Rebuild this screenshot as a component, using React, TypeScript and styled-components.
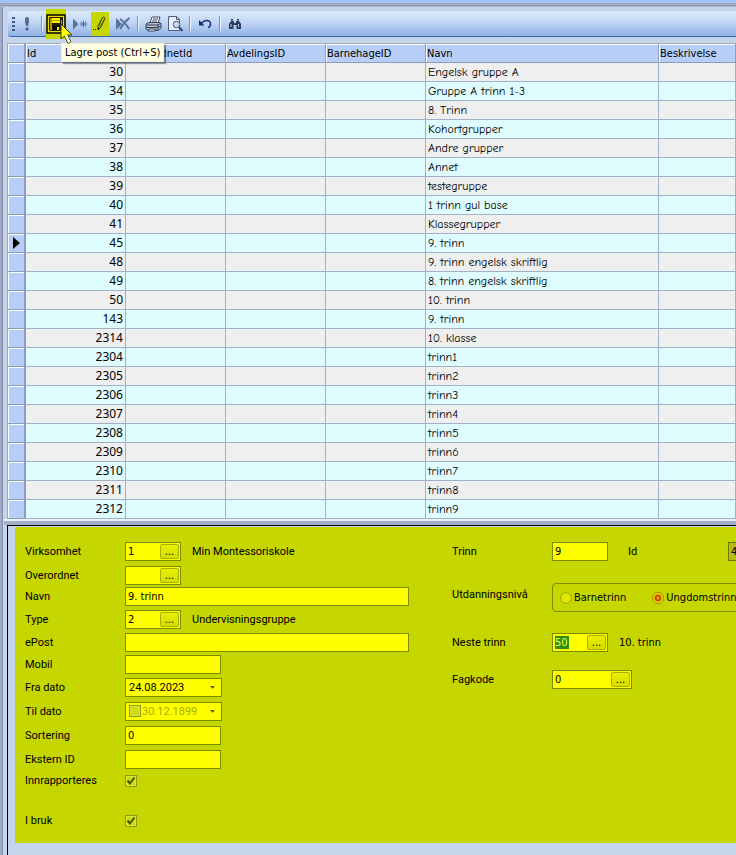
import React from "react";
import styled, { createGlobalStyle, css } from "styled-components";

const Global = createGlobalStyle`
  *, *::before, *::after { box-sizing: border-box; }
  html, body { margin: 0; padding: 0; background: #c4d5ea; overflow-x: hidden; }
  input, button, label { font: inherit; color: inherit; }
`;

const tahoma = `"DejaVu Sans Condensed", "Noto Sans", sans-serif`;
const sans = `Roboto, "Liberation Sans", Arial, sans-serif`;
const comic = `"Comic Sans MS", "Comic Neue", "Noto Sans", sans-serif`;

const Shell = styled.div`
  display: flex;
  flex-direction: column;
  min-height: 100vh;
  overflow: hidden;
  background: #c4d5ea;
  color: #000;
`;

const TitleStrip = styled.div`
  height: 7px;
  background: linear-gradient(#a2c3f8 0 3px, #9aa5bd 3px 4px, #a8b0c4 4px 5px, #8b95b2 5px 6px, #b3bccd 6px);
`;

const Frame = styled.div`
  flex: 1;
  display: flex;
  flex-direction: column;
  border-left: 1px solid #a3a9c8;
  box-shadow: inset 1px 0 #9ba3c4, inset 2px 0 #8790ad;
  padding: 4px 0 0 6px;
`;

const Toolbar = styled.div`
  position: relative;
  z-index: 2;
  display: flex;
  align-items: center;
  height: 26px;
  margin-left: 1px;
  padding-left: 4px;
  border-bottom: 1px solid #3b66ab;
  border-radius: 3px 0 0 3px;
  background: linear-gradient(#deebfc, #c0d6f5 45%, #91b2e6);
`;

const Grip = styled.div`
  width: 3px;
  height: 14px;
  margin-right: 1px;
  background: repeating-linear-gradient(#43597f 0 2px, transparent 2px 4px);
`;

const Separator = styled.div`
  width: 2px;
  height: 15px;
  margin: 0 3px;
  background: linear-gradient(90deg, #6f94ce 50%, #eef5ff 50%);
`;

const Spacer = styled.div`
  width: 3px;
`;

const ToolButton = styled.button<{ $marked?: "tall" | "short" }>`
  position: relative;
  display: flex;
  flex: none;
  align-items: center;
  justify-content: center;
  width: ${(p) => (p.$marked === "tall" ? 20 : p.$marked ? 18 : 22)}px;
  height: ${(p) => (p.$marked === "tall" ? 30 : 24)}px;
  padding: 0;
  border: 0;
  background: ${(p) => (p.$marked ? "#c6d600" : "transparent")};
  svg { display: block; flex: none; }
`;

const Tooltip = styled.span`
  position: absolute;
  top: 34px;
  left: 15px;
  height: 19px;
  padding: 0 3px;
  border: 1px solid #f3f3d8;
  background: #ffffe1;
  box-shadow: 2px 2px 1px rgba(60, 70, 90, 0.55);
  font: 11px/17px ${tahoma};
  white-space: nowrap;
`;

const Pointer = styled.svg`
  position: absolute;
  top: 14px;
  left: 14px;
  z-index: 1;
`;

const GridTable = styled.table`
  width: 100%;
  margin-top: 6px;
  border-collapse: separate;
  border-spacing: 0;
  table-layout: fixed;
  border-top: 1px solid #9caabf;
  border-left: 1px solid #9caabf;
`;

const HeadCell = styled.th`
  height: 19px;
  padding: 2px 1px 0;
  border-right: 1px solid #8d9dbb;
  border-bottom: 1px solid #8d9dbb;
  background: #b7cff8;
  box-shadow: inset 1px 1px #fff;
  font: 11px/16px ${tahoma};
  text-align: left;
  white-space: nowrap;
`;

const Row = styled.tr`
  background: #efefef;
  &:nth-child(even) { background: #dffdff; }
`;

const RowHandle = styled.th`
  height: 19px;
  padding: 0 0 0 5px;
  border-right: 2px solid #8d9dbb;
  border-bottom: 1px solid #8d9dbb;
  background: #b7cff8;
  box-shadow: inset 1px 1px #fff;
  svg { display: block; }
`;

const Cell = styled.td<{ $number?: boolean }>`
  height: 19px;
  padding: 0 2px;
  border-right: 1px solid #a0b1c8;
  border-bottom: 1px solid #a0b1c8;
  font: ${(p) => (p.$number ? `12px/18px "Noto Sans", sans-serif` : `12px/18px ${comic}`)};
  text-align: ${(p) => (p.$number ? "right" : "left")};
  white-space: nowrap;
  overflow: hidden;
`;

const Splitter = styled.div`
  height: 6px;
  margin-left: -3px;
  border-top: 2px solid #edf2fa;
  background: #a0b2cb;
`;

const DetailPane = styled.div`
  flex: 1;
  padding: 1px 0 12px 7px;
  border-top: 1px solid #000;
  border-left: 1px solid #000;
`;

const Form = styled.form`
  display: grid;
  grid-template-columns: 427px minmax(0, 1fr);
  padding: 15px 0 9px 10px;
  overflow: hidden;
  background: #c6d600;
  font: 11px/14px ${sans};
`;

const Column = styled.div`
  display: flex;
  flex-direction: column;
  min-width: 0;
`;

const FieldRow = styled.div<{ $gap?: number; $height?: number }>`
  display: flex;
  align-items: center;
  height: ${(p) => p.$height ?? 19}px;
  margin-bottom: ${(p) => p.$gap ?? 4}px;
  white-space: nowrap;
`;

const Label = styled.label`
  flex: none;
  width: 100px;
`;

const IdLabel = styled(Label)`
  margin-left: 20px;
`;

const GroupLabel = styled.span`
  flex: none;
  width: 100px;
  padding-bottom: 6px;
`;

const box = css`
  flex: none;
  height: 19px;
  border: 1px solid #7c8c00;
  background: #ff0;
`;

const TextBox = styled.input<{ $width: number; $readonly?: boolean }>`
  ${box}
  width: ${(p) => p.$width}px;
  padding: 0 2px;
  border-radius: 0;
  outline: 0;
  font: 11px/17px ${tahoma};
  ${(p) => p.$readonly && css`background: #b5bd0d; border-color: #6b7400;`}
`;

const LookupBox = styled.div<{ $width: number }>`
  ${box}
  display: flex;
  align-items: stretch;
  width: ${(p) => p.$width}px;
`;

const BareInput = styled.input<{ $marked?: boolean }>`
  flex: 1;
  min-width: 0;
  width: 0;
  padding: 0 2px;
  border: 0;
  outline: 0;
  background: ${(p) =>
    p.$marked
      ? "linear-gradient(#2e8f12, #2e8f12) 2px 2px / 14px 13px no-repeat"
      : "transparent"};
  color: ${(p) => (p.$marked ? "#e8ff50" : "#000")};
  font: 11px/17px ${tahoma};
`;

const MoreButton = styled.button`
  width: 19px;
  margin: 1px;
  padding: 0;
  border: 1px solid #a5b000;
  border-radius: 2px;
  background: linear-gradient(#e8ee00, #d5dd00);
  font: 11px/13px ${tahoma};
`;

const Info = styled.span`
  margin-left: 11px;
`;

const InfoPlain = styled(Info)`
  font: 11px/14px ${tahoma};
`;

const DateInput = styled(BareInput)`
  padding: 0 0 0 3px;
  font: 11px/17px ${sans};
  &:disabled { padding-left: 0; color: #a3ab00; }
`;

const DropButton = styled.button`
  width: 17px;
  padding: 0;
  border: 0;
  background: transparent;
  svg { display: block; margin: 0 auto; }
`;

const Check = styled.input`
  flex: none;
  appearance: none;
  width: 12px;
  height: 12px;
  margin: 0 1px 0 0;
  border: 1px solid #8c9a14;
  outline: 1px solid #dce53c;
  outline-offset: -2px;
  background: #d2dc14;
  &:checked {
    background: #d2dc14 url("data:image/svg+xml,%3Csvg xmlns='http://www.w3.org/2000/svg' viewBox='0 0 10 10'%3E%3Cpath d='M1.5 4.5 4 7.5 8.5 1.5' fill='none' stroke='%23435900' stroke-width='2'/%3E%3C/svg%3E") center / 10px 10px no-repeat;
  }
  &:disabled { margin: 2px 1px 0 3px; }
`;

const RadioGroup = styled.div`
  display: flex;
  flex: none;
  align-items: center;
  gap: 26px;
  width: 260px;
  height: 29px;
  padding-left: 7px;
  border: 1px solid #7c8c00;
  border-radius: 4px;
`;

const RadioLabel = styled.label`
  display: flex;
  align-items: center;
  gap: 2px;
  font: 11px/14px ${tahoma};
`;

const Radio = styled.input`
  appearance: none;
  width: 12px;
  height: 12px;
  margin: 0;
  border: 1px solid #a2a900;
  border-radius: 50%;
  background: radial-gradient(circle, #e2e800 40%, #cfd700);
  &:checked {
    border-color: #a98900;
    background: radial-gradient(circle, #f5a400 0 1px, #c84b00 2px 3px, #eee000 4px);
  }
`;

const icon = { width: 16, height: 16, viewBox: "0 0 16 16", "aria-hidden": true } as const;

const BangIcon = () => (
  <svg {...icon}>
    <path d="M6 2.500Q6 1 8 1t2 1.500V6L9 10H7L6 6z" fill="#596b8c" />
    <circle cx="8" cy="13" r="1.800" fill="#596b8c" />
  </svg>
);

const SaveIcon = () => (
  <svg width="20" height="20" viewBox="0 0 20 20" aria-hidden="true">
    <rect x="1" y="1" width="18" height="18" fill="#f4dc00" stroke="#000" strokeWidth="1.500" />
    <path d="M3 3h14v14H4l-1-1z" fill="#221f00" />
    <path d="M5 4h1v12H4V4zM15 6h1v10h-1z" fill="#a89b00" />
    <path d="M6 4h8v5H6z" fill="#ffed00" />
    <path d="M6 6.500h8" stroke="#b5a600" />
    <path d="M7 12h6v4H7z" fill="#000" />
    <path d="M11 13h2v3h-2z" fill="#ffef00" />
  </svg>
);

const NewIcon = () => (
  <svg {...icon}>
    <path d="M1 2.500 6.500 8 1 13.500z" fill="#59719f" />
    <path d="M11.500 4.500v7M8.500 6l6 4M14.500 6l-6 4M8 8h7" stroke="#59719f" />
  </svg>
);

const PencilIcon = () => (
  <svg {...icon}>
    <path d="M11 1 13 2 9 11 6 14V10z" fill="#d8e000" stroke="#344000" />
    <path d="M10 3 7 10M12 4 8 11" stroke="#344000" strokeWidth=".7" />
    <path d="M6 11v3l2-2zM1 13h1v1H1zM3 13h1v1H3z" fill="#182000" />
  </svg>
);

const CancelIcon = () => (
  <svg {...icon}>
    <path d="M1 2 7 8 1 14z" fill="#59719f" />
    <path d="M5 3Q10 6 14 13M14.500 2Q9 6 5 13" fill="none" stroke="#59719f" strokeWidth="2" />
  </svg>
);

const PrintIcon = () => (
  <svg width="17" height="16" viewBox="0 0 17 16" aria-hidden="true">
    <path d="M5 7 7 1h8l-2 6z" fill="#f8fbff" stroke="#3e4c63" />
    <path d="M8 3h5M7 5h5" stroke="#3e4c63" />
    <path d="M1 8 4 6.500h11l1 1V12l-3 2.500H3L1 13z" fill="#b4bfcf" stroke="#35425a" />
    <path d="M1 9h12l3-2M1 11.500h12l3-2M13 9v5" fill="none" stroke="#35425a" />
    <path d="M4 13h7l-1 2H3z" fill="#fff" stroke="#35425a" />
  </svg>
);

const PreviewIcon = () => (
  <svg width="17" height="16" viewBox="0 0 17 16" aria-hidden="true">
    <path d="M1.500.500h8l3 3v11h-11z" fill="#e5effd" stroke="#4c5d79" />
    <path d="M9.500.500v3h3" fill="none" stroke="#4c5d79" />
    <circle cx="9.500" cy="8.500" r="3.300" fill="#c4d6ed" stroke="#4c5d79" />
    <path d="m12 11 3.500 4" stroke="#354761" strokeWidth="2" />
  </svg>
);

const UndoIcon = () => (
  <svg {...icon}>
    <path d="M2 4v5.500h5.500z" fill="#1c2b79" />
    <path d="M4 8C7 3.500 13 3.500 13.500 7.500c.2 2-1 3.500-2.500 4" fill="none" stroke="#1c2b79" strokeWidth="1.400" />
  </svg>
);

const FindIcon = () => (
  <svg {...icon}>
    <path d="M4 3h2v2h1v2h2V5h1V3h2v2l2 3v5H9.500V9h-3v4H2V8l2-3z" fill="#2b3c5e" />
    <path d="M4 8v3M11.500 8v3M5 4v1M11 4v1" stroke="#bdd0ee" />
  </svg>
);

const DropArrow = () => (
  <svg width="5" height="3" viewBox="0 0 5 3" aria-hidden="true">
    <path d="M0 0h5L2.500 3z" fill="#5e6b00" />
  </svg>
);

const groups: [number, string][] = [
  [30, "Engelsk gruppe A"],
  [34, "Gruppe A trinn 1-3"],
  [35, "8. Trinn"],
  [36, "Kohortgrupper"],
  [37, "Andre grupper"],
  [38, "Annet"],
  [39, "testegruppe"],
  [40, "1 trinn gul base"],
  [41, "Klassegrupper"],
  [45, "9. trinn"],
  [48, "9. trinn engelsk skriftlig"],
  [49, "8. trinn engelsk skriftlig"],
  [50, "10. trinn"],
  [143, "9. trinn"],
  [2314, "10. klasse"],
  [2304, "trinn1"],
  [2305, "trinn2"],
  [2306, "trinn3"],
  [2307, "trinn4"],
  [2308, "trinn5"],
  [2309, "trinn6"],
  [2310, "trinn7"],
  [2311, "trinn8"],
  [2312, "trinn9"],
];

const currentId = 45;

type LookupProps = { id: string; value: string; width?: number; marked?: boolean };

const Lookup = ({ id, value, width = 56, marked }: LookupProps) => (
  <LookupBox $width={width}>
    <BareInput id={id} defaultValue={value} $marked={marked} />
    <MoreButton type="button" aria-label="Velg">...</MoreButton>
  </LookupBox>
);

export default function App() {
  return (
    <>
      <Global />
      <Shell>
        <TitleStrip />
        <Frame>
          <Toolbar role="toolbar">
            <Grip />
            <ToolButton aria-label="Oppdater"><BangIcon /></ToolButton>
            <Separator />
            <ToolButton $marked="tall" aria-label="Lagre post">
              <SaveIcon />
              <Pointer width="15" height="22" viewBox="0 0 15 22" aria-hidden="true">
                <path d="M1 1v15l3.500-3 3.500 7.500 3-1.500L7.500 12H12z" fill="#ff0" stroke="#3c3c00" />
                <path d="m5 13 3.500 7 2-1-3.500-7z" fill="#fff" />
              </Pointer>
              <Tooltip role="tooltip">Lagre post (Ctrl+S)</Tooltip>
            </ToolButton>
            <Spacer />
            <ToolButton aria-label="Ny post"><NewIcon /></ToolButton>
            <ToolButton $marked="short" aria-label="Rediger"><PencilIcon /></ToolButton>
            <Spacer />
            <ToolButton aria-label="Avbryt"><CancelIcon /></ToolButton>
            <Separator />
            <ToolButton aria-label="Skriv ut"><PrintIcon /></ToolButton>
            <ToolButton aria-label="Forhåndsvis"><PreviewIcon /></ToolButton>
            <Separator />
            <ToolButton aria-label="Angre"><UndoIcon /></ToolButton>
            <Separator />
            <ToolButton aria-label="Søk"><FindIcon /></ToolButton>
          </Toolbar>

          <GridTable>
            <colgroup>
              <col width="18" />
              <col width="100" />
              <col width="100" />
              <col width="100" />
              <col width="100" />
              <col width="233" />
              <col />
            </colgroup>
            <thead>
              <tr>
                <RowHandle />
                <HeadCell>Id</HeadCell>
                <HeadCell>OverordnetId</HeadCell>
                <HeadCell>AvdelingsID</HeadCell>
                <HeadCell>BarnehageID</HeadCell>
                <HeadCell>Navn</HeadCell>
                <HeadCell>Beskrivelse</HeadCell>
              </tr>
            </thead>
            <tbody>
              {groups.map(([id, name]) => (
                <Row key={id}>
                  <RowHandle>
                    {id === currentId && (
                      <svg width="7" height="12" viewBox="0 0 7 12" aria-hidden="true">
                        <path d="M0 0 7 6 0 12z" />
                      </svg>
                    )}
                  </RowHandle>
                  <Cell $number>{id}</Cell>
                  <Cell />
                  <Cell />
                  <Cell />
                  <Cell>{name}</Cell>
                  <Cell />
                </Row>
              ))}
            </tbody>
          </GridTable>

          <Splitter />

          <DetailPane>
            <Form>
              <Column>
                <FieldRow $gap={5}>
                  <Label htmlFor="virksomhet">Virksomhet</Label>
                  <Lookup id="virksomhet" value="1" />
                  <Info>Min Montessoriskole</Info>
                </FieldRow>
                <FieldRow $gap={2}>
                  <Label htmlFor="overordnet">Overordnet</Label>
                  <Lookup id="overordnet" value="" />
                </FieldRow>
                <FieldRow>
                  <Label htmlFor="navn">Navn</Label>
                  <TextBox id="navn" $width={284} defaultValue="9. trinn" />
                </FieldRow>
                <FieldRow>
                  <Label htmlFor="type">Type</Label>
                  <Lookup id="type" value="2" />
                  <Info>Undervisningsgruppe</Info>
                </FieldRow>
                <FieldRow $gap={3}>
                  <Label htmlFor="epost">ePost</Label>
                  <TextBox id="epost" $width={284} />
                </FieldRow>
                <FieldRow>
                  <Label htmlFor="mobil">Mobil</Label>
                  <TextBox id="mobil" $width={96} />
                </FieldRow>
                <FieldRow $gap={5}>
                  <Label htmlFor="fra">Fra dato</Label>
                  <LookupBox $width={97}>
                    <DateInput id="fra" defaultValue="24.08.2023" />
                    <DropButton type="button" aria-label="Åpne kalender"><DropArrow /></DropButton>
                  </LookupBox>
                </FieldRow>
                <FieldRow $gap={5}>
                  <Label htmlFor="til">Til dato</Label>
                  <LookupBox $width={97}>
                    <Check type="checkbox" disabled aria-label="Bruk til dato" />
                    <DateInput id="til" defaultValue="30.12.1899" disabled />
                    <DropButton type="button" aria-label="Åpne kalender"><DropArrow /></DropButton>
                  </LookupBox>
                </FieldRow>
                <FieldRow $gap={5}>
                  <Label htmlFor="sortering">Sortering</Label>
                  <TextBox id="sortering" $width={96} defaultValue="0" />
                </FieldRow>
                <FieldRow $gap={2}>
                  <Label htmlFor="ekstern">Ekstern ID</Label>
                  <TextBox id="ekstern" $width={96} />
                </FieldRow>
                <FieldRow $gap={21}>
                  <Label htmlFor="innrapporteres">Innrapporteres</Label>
                  <Check id="innrapporteres" type="checkbox" defaultChecked />
                </FieldRow>
                <FieldRow>
                  <Label htmlFor="ibruk">I bruk</Label>
                  <Check id="ibruk" type="checkbox" defaultChecked />
                </FieldRow>
              </Column>

              <Column>
                <FieldRow $gap={22}>
                  <Label htmlFor="trinn">Trinn</Label>
                  <TextBox id="trinn" $width={56} defaultValue="9" />
                  <IdLabel htmlFor="postid">Id</IdLabel>
                  <TextBox id="postid" $width={56} $readonly readOnly defaultValue="45" />
                </FieldRow>
                <FieldRow $height={29} $gap={21}>
                  <GroupLabel id="niva">Utdanningsnivå</GroupLabel>
                  <RadioGroup role="radiogroup" aria-labelledby="niva">
                    <RadioLabel><Radio type="radio" name="niva" />Barnetrinn</RadioLabel>
                    <RadioLabel><Radio type="radio" name="niva" defaultChecked />Ungdomstrinn</RadioLabel>
                  </RadioGroup>
                </FieldRow>
                <FieldRow $gap={18}>
                  <Label htmlFor="neste">Neste trinn</Label>
                  <Lookup id="neste" value="50" marked />
                  <InfoPlain>10. trinn</InfoPlain>
                </FieldRow>
                <FieldRow>
                  <Label htmlFor="fagkode">Fagkode</Label>
                  <Lookup id="fagkode" value="0" width={80} />
                </FieldRow>
              </Column>
            </Form>
          </DetailPane>
        </Frame>
      </Shell>
    </>
  );
}
